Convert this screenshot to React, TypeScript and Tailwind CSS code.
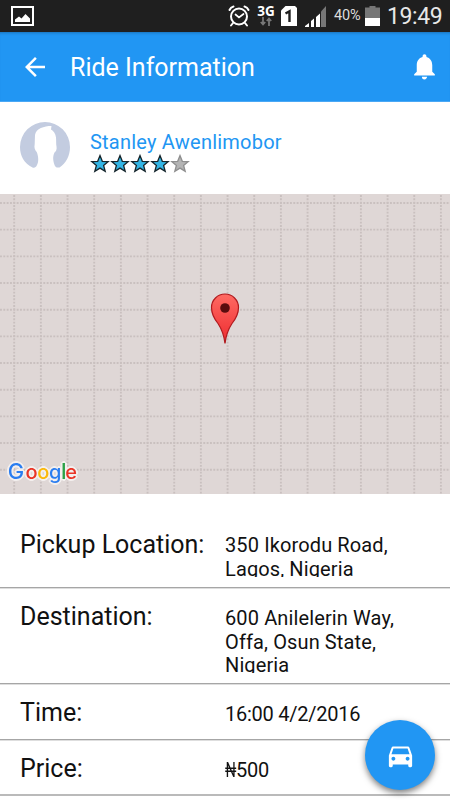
import type { ReactNode } from "react";
import { MdArrowBack, MdDirectionsCar, MdNotifications } from "react-icons/md";

const STAR = "M10 1.6 12.3 7.3 18.2 7.6 13.6 11.5 15.2 17.4 10 14.1 4.8 17.4 6.4 11.5 1.8 7.6 7.7 7.3Z";
const PITCH = 26.67;

function StatusBar() {
  return (
    <div className="flex h-8 shrink-0 items-center bg-[#1f1f1f] pl-[11px] text-white">
      <svg width="23" height="20" viewBox="0 0 23 20" className="shrink-0">
        <rect x="1" y="1" width="21" height="18" fill="none" stroke="#fff" strokeWidth="2" />
        <path d="M4 16v-2.500l4-3 2.500 2 4-4.500 4.500 4.500V16z" fill="#fff" />
      </svg>
      <svg width="22" height="22" viewBox="0 0 22 22" fill="none" stroke="#fff" strokeLinecap="round" className="ml-[194px] shrink-0">
        <circle cx="11" cy="11.500" r="8" strokeWidth="2" />
        <path d="M1.500 5a6 6 0 0 1 4-3.500M20.500 5a6 6 0 0 0-4-3.500M5 18l-2 2.500M17 18l2 2.500" strokeWidth="2" />
        <path d="M7.500 9.500l3.500 3 4.500-3.500" strokeWidth="1.700" />
      </svg>
      <div className="ml-[7px] flex w-[18px] shrink-0 flex-col items-center pb-px">
        <span className="font-['Open_Sans',sans-serif] text-[13.5px] leading-[11px] font-bold">3G</span>
        <svg width="12" height="9" viewBox="0 0 12 9" fill="none" stroke="#777" strokeWidth="1.800">
          <path d="M3 0v7M.8 5 3 7.500 5.200 5M9 9V2M6.800 4 9 1.500 11.200 4" />
        </svg>
      </div>
      <svg width="16" height="20" viewBox="0 0 16 20" className="ml-[6px] shrink-0">
        <path d="M4.500 0H14l2 2v18H0V4.500z" fill="#fff" />
        <path d="M4.500 7.500 8.500 5.200V16" fill="none" stroke="#1f1f1f" strokeWidth="2.400" />
      </svg>
      <svg width="21" height="21" viewBox="0 0 21 21" className="ml-[8px] shrink-0">
        <path d="M0 21v-1l4-3v4zM6 21v-6l3-2.500V21zM11 21V11l4-3.500V21z" fill="#fff" />
        <path d="M16 21V5.500L21 0v21z" fill="#777" />
      </svg>
      <span className="ml-[8px] w-[28px] shrink-0 text-[14.5px] leading-none tracking-[-0.1px] whitespace-nowrap text-[#ddd]">
        40%
      </span>
      <svg width="15" height="20" viewBox="0 0 15 20" className="ml-[3px] shrink-0">
        <path d="M0 1.500h4.500V0h6v1.500H15V12H0z" fill="#777" />
        <path d="M0 12h15v8H0z" fill="#fff" />
      </svg>
      <span className="ml-[7px] text-[23px] leading-none tracking-[-0.4px] text-[#e8e8e8]">19:49</span>
    </div>
  );
}

function Avatar() {
  return (
    <svg width="50" height="50" viewBox="0 0 50 50">
      <path
        d="M12.500 45.500C4 41 0 34 0 25a25 25 0 0 1 50 0c0 9-4 16-10.500 20.500-3 .5-4.500-.5-5.500-4-.8-3-1.500-7 .5-11 1.500-1 2.500-3 2-6-.5-2-.2-6-.5-9-.5-4-2.500-6.500-5-8l.5-3.500C24 4 16 6.500 15 13c-.3 3 0 6-.3 9-.8 4 .3 6 2 8 2 5 2 10 .3 13-1 2.500-2.500 3-4.500 2.500z"
        fill="#c3cce0"
      />
    </svg>
  );
}

function Stars({ rating }: { rating: number }) {
  return (
    <div className="flex">
      {[0, 1, 2, 3, 4].map((i) => (
        <svg key={i} width="20" height="20" viewBox="0 0 20 20">
          <path
            d={STAR}
            fill={i < rating ? "#33b5e5" : "#b4b4b4"}
            stroke={i < rating ? "#16262c" : "#8f8f8f"}
            strokeWidth="1.300"
          />
        </svg>
      ))}
    </div>
  );
}

function Map() {
  const rows = Array.from({ length: 11 }, (_, i) => 9 + i * PITCH);
  const cols = Array.from({ length: 17 }, (_, i) => 14.2 + i * PITCH);
  return (
    <svg width="450" height="300" viewBox="0 0 450 300" className="block shrink-0 bg-[#dfd7d6]">
      <g stroke="#c9c0bf" strokeWidth="1.900" strokeDasharray="1.900 1.433">
        {rows.map((y) => (
          <path key={y} d={`M0 ${y}H450`} />
        ))}
        {cols.map((x) => (
          <path key={x} d={`M${x} 1V300`} />
        ))}
      </g>
      <defs>
        <linearGradient id="pin" x1="0" y1="0" x2="0" y2="1">
          <stop offset="0" stopColor="#ff6a63" />
          <stop offset="1" stopColor="#ed2b2f" />
        </linearGradient>
      </defs>
      <path
        d="M225 149.500c-1-8-3-14-7-20-4-5-6.500-10-6.500-16a13.500 13.500 0 0 1 27 0c0 6-2.500 11-6.500 16-4 6-6 12-7 20z"
        fill="url(#pin)"
        stroke="#b01a1e"
        strokeWidth="1.200"
      />
      <circle cx="225" cy="114" r="4.800" fill="#590c0e" />
      <text
        y="285.300"
        fontSize="20"
        className="font-['Inter',sans-serif] font-medium [filter:drop-shadow(1px_1px_0_#f3efee)_drop-shadow(-1px_-1px_0_#f3efee)_drop-shadow(1px_-1px_0_#f3efee)_drop-shadow(-1px_1px_0_#f3efee)]"
      >
        <tspan x="7.800" fontSize="22" fill="#2a7df0">G</tspan>
        <tspan x="25.600" fill="#ea3527">o</tspan>
        <tspan x="37.300" fill="#fbb90b">o</tspan>
        <tspan x="49" fill="#2a7df0">g</tspan>
        <tspan x="61" fontSize="22" fill="#2ca248">l</tspan>
        <tspan x="65.300" fill="#ea3527">e</tspan>
      </text>
    </svg>
  );
}

function Row({ label, className, children }: { label: string; className: string; children: ReactNode }) {
  return (
    <div className={`flex shrink-0 pl-5 ${className}`}>
      <span className="w-[205px] shrink-0 text-[25px] leading-[30px]">{label}</span>
      {children}
    </div>
  );
}

export default function App() {
  return (
    <div className="relative flex h-[800px] w-[450px] flex-col overflow-hidden bg-white font-['Roboto',sans-serif] text-[#111]">
      <StatusBar />
      <header className="flex h-[70px] shrink-0 items-center border-b border-[#4aa8f5] bg-[#2196f3] pr-[10px] pl-5 text-white shadow-[inset_0_3px_3px_-2px_rgba(0,0,0,0.25)]">
        <MdArrowBack size={30} />
        <h1 className="ml-5 flex-1 pt-[2px] text-[25px] leading-[30px]">Ride Information</h1>
        <MdNotifications size={31} />
      </header>

      <section className="flex h-[92px] shrink-0 pt-5 pl-5">
        <Avatar />
        <div className="pt-[8px] pl-5">
          <p className="text-[20px] leading-6 tracking-[0.22px] text-[#2196f3]">Stanley Awenlimobor</p>
          <Stars rating={4} />
        </div>
      </section>

      <Map />

      <Row label="Pickup Location:" className="h-[94px] border-b border-[#a6a6a6] pt-9 shadow-[0_1px_0_#dedede]">
        <p className="mt-1 h-[43px] w-[190px] overflow-hidden text-[20px] leading-[23.5px] tracking-[0.12px]">
          350 Ikorodu Road, Lagos, Nigeria
        </p>
      </Row>
      <Row label="Destination:" className="h-24 border-b border-[#a6a6a6] pt-[14px] shadow-[0_1px_0_#dedede]">
        <p className="mt-[5px] h-[66px] w-[190px] overflow-hidden text-[20px] leading-[23.5px] tracking-[0.12px]">
          600 Anilelerin Way, Offa, Osun State, Nigeria
        </p>
      </Row>
      <Row label="Time:" className="h-14 border-b border-[#a6a6a6] pt-[14px] shadow-[0_1px_0_#dedede]">
        <p className="mt-[5px] text-[20px] leading-[23.5px] tracking-[-0.25px]">16:00 4/2/2016</p>
      </Row>
      <Row label="Price:" className="h-14 border-b-2 border-[#bababa] pt-[14px]">
        <p className="mt-[5px] flex text-[20px] leading-[23.5px] tracking-[-0.25px]">
          <span className="w-[11px] origin-left scale-x-[0.72]">₦</span>
          <span>500</span>
        </p>
      </Row>

      <button className="absolute right-[15px] bottom-[10px] flex h-[70px] w-[70px] items-center justify-center rounded-full bg-[#2196f3] text-white shadow-[0_3px_6px_rgba(0,0,0,0.5)]">
        <MdDirectionsCar size={31} />
      </button>
    </div>
  );
}
